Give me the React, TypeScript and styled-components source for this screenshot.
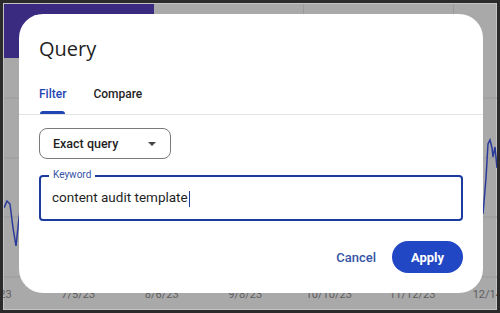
import React from "react";
import styled, { createGlobalStyle } from "styled-components";

const GlobalStyle = createGlobalStyle`
    html, body {
        margin: 0;
        padding: 0;
        background: #2b2b2b;
    }
    * {
        box-sizing: border-box;
    }
`;

const Frame = styled.div`
    position: relative;
    width: 500px;
    height: 313px;
    border: 3px solid #2b2b2b;
    background: #a9a9a9;
    box-shadow: inset 0 0 0 1px #c4c4c4;
    overflow: hidden;
    font-family: Roboto, "Liberation Sans", sans-serif;
`;

const Page = styled.div`
    display: flex;
    flex-direction: column;
    height: 100%;
    padding: 1px 0 0 1px;
`;

const CardRow = styled.div`
    display: flex;
    height: 54px;
    flex-shrink: 0;
`;

const MetricCard = styled.div<{ $active?: boolean }>`
    width: 150px;
    flex-shrink: 0;
    padding: 8px 0 0 30px;
    font-size: 13px;
    color: ${(p) => (p.$active ? "#d8d2ee" : "#7a7a7a")};
    background: ${(p) => (p.$active ? "#3a2a80" : "transparent")};
    border-right: 1px solid ${(p) => (p.$active ? "#3a2a80" : "#9a9a9a")};
`;

const ChartArea = styled.div`
    flex: 1;
    min-height: 0;

    & > svg {
        display: block;
        width: 100%;
        height: 100%;
    }
`;

const AxisRow = styled.div`
    display: flex;
    height: 26px;
    flex-shrink: 0;
    margin-left: -51px;
    padding-top: 4px;
`;

const AxisLabel = styled.span`
    width: 83.5px;
    flex-shrink: 0;
    text-align: center;
    font-size: 11px;
    color: #5e5e5e;
`;

const Dialog = styled.div`
    position: absolute;
    left: 16px;
    top: 11px;
    width: 464px;
    height: 279px;
    background: #ffffff;
    border-radius: 24px;
    display: flex;
    flex-direction: column;
`;

const Title = styled.h2`
    margin: 0;
    padding: 21px 20px 0;
    font-family: "Open Sans", Roboto, sans-serif;
    font-size: 20px;
    font-weight: 400;
    line-height: 28px;
    color: #1f1f1f;
`;

const TabBar = styled.div`
    display: flex;
    gap: 27px;
    padding: 0 20px;
    margin-top: 14px;
    border-bottom: 1px solid #e3e3e3;
`;

const Tab = styled.div<{ $active?: boolean }>`
    position: relative;
    height: 37px;
    padding-top: 10px;
    font-size: 12px;
    font-weight: 500;
    color: ${(p) => (p.$active ? "#1f44b4" : "#1f1f1f")};

    &::after {
        content: "";
        display: ${(p) => (p.$active ? "block" : "none")};
        position: absolute;
        left: 1px;
        right: 1px;
        bottom: 0;
        height: 3px;
        border-radius: 3px 3px 0 0;
        background: #1f44b4;
    }
`;

const Body = styled.div`
    display: flex;
    flex-direction: column;
    padding: 13px 20px 0;
`;

const Select = styled.div`
    display: flex;
    align-items: center;
    justify-content: space-between;
    width: 132px;
    height: 31px;
    padding: 0 14px 0 13px;
    border: 1px solid #7a7a7a;
    border-radius: 8px;
    font-size: 12.5px;
    font-weight: 500;
    color: #1f1f1f;
`;

const Field = styled.div`
    position: relative;
    margin-top: 16px;
    height: 46px;
    border: 2px solid #1c3b9f;
    border-radius: 4px;
    display: flex;
    align-items: center;
    padding: 0 11px;
`;

const FieldLabel = styled.span`
    position: absolute;
    left: 8px;
    top: -8px;
    padding: 0 4px;
    background: #ffffff;
    font-size: 10px;
    line-height: 12px;
    color: #3852a8;
`;

const FieldValue = styled.span`
    font-size: 13.5px;
    color: #1f1f1f;
`;

const Caret = styled.span`
    display: inline-block;
    width: 1px;
    height: 16px;
    margin-left: 1px;
    vertical-align: middle;
    background: #1c3b9f;
`;

const Actions = styled.div`
    display: flex;
    justify-content: flex-end;
    align-items: center;
    gap: 16px;
    padding: 20px 20px 0;
`;

const TextButton = styled.button`
    border: none;
    background: none;
    padding: 0;
    font-family: inherit;
    font-size: 13px;
    font-weight: 500;
    color: #3553a6;
`;

const FilledButton = styled.button`
    width: 71px;
    height: 32px;
    border: none;
    border-radius: 16px;
    background: #2147c4;
    font-family: inherit;
    font-size: 13px;
    font-weight: 700;
    color: #ffffff;
`;

const axisDates = ["6/3/23", "7/5/23", "8/6/23", "9/8/23", "10/10/23", "11/12/23", "12/14/23"];

export default function App() {
    return (
        <>
            <GlobalStyle />
            <Frame>
                <Page>
                    <CardRow>
                        <MetricCard $active>Total clicks</MetricCard>
                        <MetricCard>Total impressions</MetricCard>
                        <MetricCard>Average CTR</MetricCard>
                        <MetricCard />
                    </CardRow>
                    <ChartArea>
                        <svg viewBox="0 0 493 226" preserveAspectRatio="none">
                            {[40, 100, 159, 219].map((y) => (
                                <line key={y} x1="0" x2="493" y1={y} y2={y} stroke="#9b9b9b" strokeWidth="1" />
                            ))}
                            <polyline
                                points="0,150 3,143 6,146 9,170 12,188 15,160 18,140"
                                fill="none"
                                stroke="#2a3a9c"
                                strokeWidth="1.5"
                            />
                            <polyline
                                points="479,156 482,120 484,86 486,82 488,90 489,99 491,89 493,110"
                                fill="none"
                                stroke="#2a3a9c"
                                strokeWidth="1.5"
                            />
                        </svg>
                    </ChartArea>
                    <AxisRow>
                        {axisDates.map((d) => (
                            <AxisLabel key={d}>{d}</AxisLabel>
                        ))}
                    </AxisRow>
                </Page>

                <Dialog>
                    <Title>Query</Title>
                    <TabBar>
                        <Tab $active>Filter</Tab>
                        <Tab>Compare</Tab>
                    </TabBar>
                    <Body>
                        <Select>
                            Exact query
                            <svg width="8" height="4" viewBox="0 0 8 4">
                                <path d="M0 0 L4 4 L8 0 Z" fill="#444" />
                            </svg>
                        </Select>
                        <Field>
                            <FieldLabel>Keyword</FieldLabel>
                            <FieldValue>
                                content audit template
                                <Caret />
                            </FieldValue>
                        </Field>
                    </Body>
                    <Actions>
                        <TextButton>Cancel</TextButton>
                        <FilledButton>Apply</FilledButton>
                    </Actions>
                </Dialog>
            </Frame>
        </>
    );
}
